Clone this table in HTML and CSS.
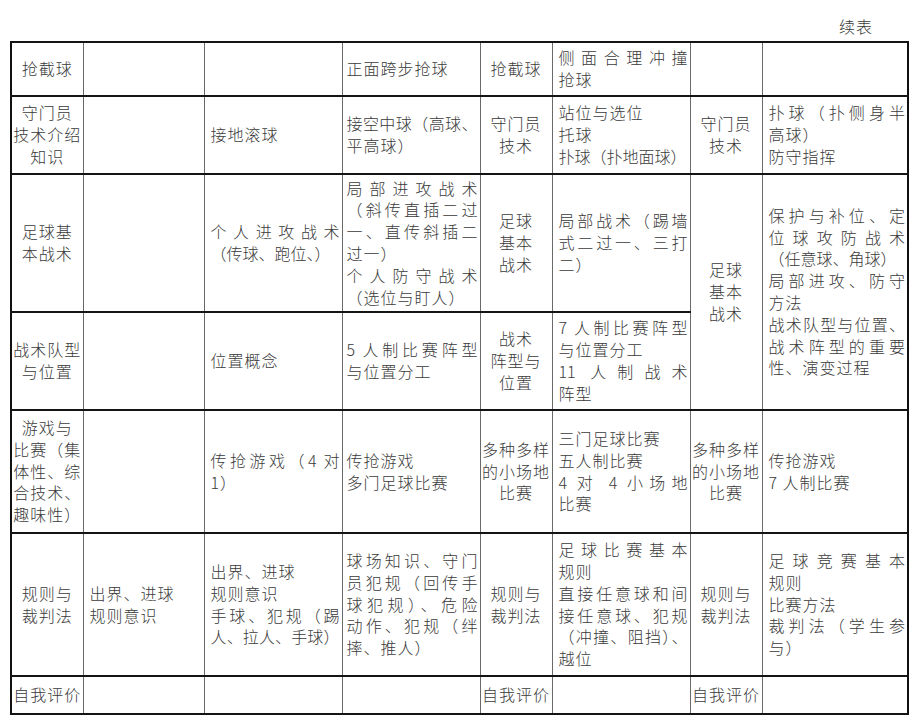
FILE: index.html
```html
<!DOCTYPE html>
<html lang="zh-CN">
<head>
<meta charset="utf-8">
<link rel="stylesheet" href="styles.css">
</head>
<body>
<div class="page">
  <div class="caption">续表</div>
  <table class="grid">
    <colgroup>
      <col class="w72"><col class="w121"><col class="w138"><col class="w138"><col class="w72"><col class="w138"><col class="w72"><col class="w147">
    </colgroup>
    <tr class="h1">
      <td class="c"><div>抢截球</div></td>
      <td></td>
      <td></td>
      <td class="n"><div>正面跨步抢球</div></td>
      <td class="c"><div>抢截球</div></td>
      <td><div class="j">侧面合理冲撞</div><div>抢球</div></td>
      <td></td>
      <td></td>
    </tr>
    <tr class="h2">
      <td class="c"><div>守门员</div><div>技术介绍</div><div>知识</div></td>
      <td></td>
      <td><div>接地滚球</div></td>
      <td class="n"><div class="j">接空中球（高球、</div><div>平高球）</div></td>
      <td class="c"><div>守门员</div><div>技术</div></td>
      <td><div>站位与选位</div><div>托球</div><div class="t">扑球（扑地面球）</div></td>
      <td class="c"><div>守门员</div><div>技术</div></td>
      <td><div class="j">扑球（扑侧身半</div><div>高球）</div><div>防守指挥</div></td>
    </tr>
    <tr class="h3">
      <td class="c"><div>足球基</div><div>本战术</div></td>
      <td></td>
      <td><div class="j">个人进攻战术</div><div class="t">（传球、跑位、）</div></td>
      <td class="n"><div class="j">局部进攻战术</div><div class="j">（斜传直插二过</div><div class="j">一、直传斜插二</div><div>过一）</div><div class="j">个人防守战术</div><div>（选位与盯人）</div></td>
      <td class="c"><div>足球</div><div>基本</div><div>战术</div></td>
      <td><div class="j">局部战术（踢墙</div><div class="j">式二过一、三打</div><div>二）</div></td>
      <td class="c" rowspan="2"><div>足球</div><div>基本</div><div>战术</div></td>
      <td rowspan="2"><div class="j">保护与补位、定</div><div class="j">位球攻防战术</div><div class="t">（任意球、角球）</div><div class="j">局部进攻、防守</div><div>方法</div><div class="j">战术队型与位置、</div><div class="j">战术阵型的重要</div><div>性、演变过程</div></td>
    </tr>
    <tr class="h4">
      <td class="c"><div>战术队型</div><div>与位置</div></td>
      <td></td>
      <td><div>位置概念</div></td>
      <td class="n"><div class="j">5 人制比赛阵型</div><div>与位置分工</div></td>
      <td class="c"><div>战术</div><div>阵型与</div><div>位置</div></td>
      <td><div class="j">7 人制比赛阵型</div><div>与位置分工</div><div class="j">11 人制战术</div><div>阵型</div></td>
    </tr>
    <tr class="h5">
      <td class="c"><div>游戏与</div><div>比赛（集</div><div>体性、综</div><div>合技术、</div><div>趣味性）</div></td>
      <td></td>
      <td><div class="j">传抢游戏（4 对</div><div>1）</div></td>
      <td class="n"><div>传抢游戏</div><div>多门足球比赛</div></td>
      <td class="c"><div>多种多样</div><div>的小场地</div><div>比赛</div></td>
      <td><div>三门足球比赛</div><div>五人制比赛</div><div class="j">4 对 4 小场地</div><div>比赛</div></td>
      <td class="c"><div>多种多样</div><div>的小场地</div><div>比赛</div></td>
      <td><div>传抢游戏</div><div>7 人制比赛</div></td>
    </tr>
    <tr class="h6">
      <td class="c"><div>规则与</div><div>裁判法</div></td>
      <td><div>出界、进球</div><div>规则意识</div></td>
      <td><div>出界、进球</div><div>规则意识</div><div class="j">手球、犯规（踢</div><div class="j">人、拉人、手球）</div></td>
      <td class="n"><div class="j">球场知识、守门</div><div class="j">员犯规（回传手</div><div class="j">球犯规）、危险</div><div class="j">动作、犯规（绊</div><div>摔、推人）</div></td>
      <td class="c"><div>规则与</div><div>裁判法</div></td>
      <td><div class="j">足球比赛基本</div><div>规则</div><div class="j">直接任意球和间</div><div class="j">接任意球、犯规</div><div class="j">（冲撞、阻挡）、</div><div>越位</div></td>
      <td class="c"><div>规则与</div><div>裁判法</div></td>
      <td><div class="j">足球竞赛基本</div><div>规则</div><div>比赛方法</div><div class="j">裁判法（学生参</div><div>与）</div></td>
    </tr>
    <tr class="h7">
      <td class="c"><div>自我评价</div></td>
      <td></td>
      <td></td>
      <td class="n"></td>
      <td class="c"><div>自我评价</div></td>
      <td></td>
      <td class="c"><div>自我评价</div></td>
      <td></td>
    </tr>
  </table>
</div>
</body>
</html>
```
FILE: styles.css
```css
html, body {
  margin: 0;
  padding: 0;
  background: #ffffff;
}
body {
  font-family: "Noto Sans CJK SC", "Noto Sans", sans-serif;
  font-size: 16px;
  font-weight: 300;
  color: #3a3a3a;
}
.page {
  padding: 0 10px;
}
.caption {
  width: 898px;
  height: 41px;
  box-sizing: border-box;
  padding: 15px 35px 0 0;
  text-align: right;
  line-height: 22px;
  letter-spacing: 1px;
}
.grid {
  border-collapse: collapse;
  table-layout: fixed;
  width: 897px;
  border: 2px solid #111111;
}
.w72 { width: 72px; }
.w121 { width: 121px; }
.w138 { width: 138px; }
.w147 { width: 146px; }
.grid td {
  border-top: 2px solid #141414;
  border-bottom: 2px solid #141414;
  border-left: 1px solid #6a6a6a;
  border-right: 1px solid #6a6a6a;
  padding: 0 2px 0 6px;
  vertical-align: middle;
  line-height: 21.8px;
  letter-spacing: 1px;
  text-align: left;
}
.grid td.n {
  padding-left: 4px;
}
.grid td.c {
  text-align: center;
  padding: 0 1px;
}
.grid td div {
  white-space: nowrap;
}
.grid td div.j {
  white-space: normal;
  text-align: justify;
  text-align-last: justify;
  letter-spacing: 0;
}
.grid td div.t {
  letter-spacing: 0;
}
.h1 { height: 54px; }
.h2 { height: 78px; }
.h3 { height: 138px; }
.h4 { height: 98px; }
.h5 { height: 123px; }
.h6 { height: 143px; }
.h7 { height: 38px; }
```
